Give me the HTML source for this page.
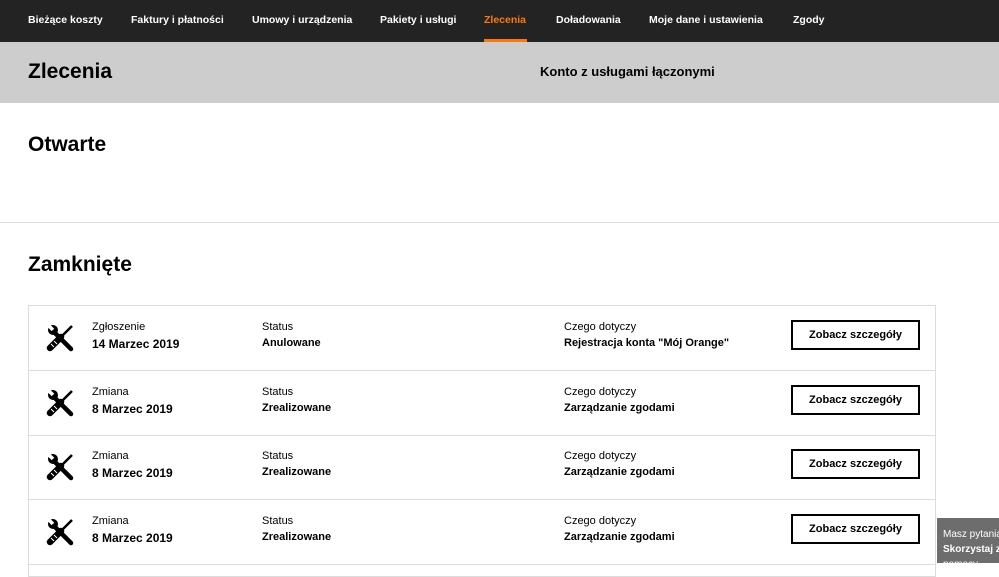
<!DOCTYPE html><html><head><meta charset="utf-8"><style>
body{margin:0;width:999px;height:563px;overflow:hidden;font-family:"Liberation Sans",Arial,sans-serif;background:#fff;position:relative}
.nav{height:42px;background:#232323;position:relative}
.nav span{position:absolute;top:14px;color:#fff;font-size:10.5px;font-weight:bold}
.nav .a{color:#ff7900}
.ul{position:absolute;left:484px;top:39px;width:43px;height:3px;background:#ff7900}
.hd{height:61px;background:#cdcdcd;position:relative}
.hd h1{position:absolute;left:28px;top:18px;margin:0;font-size:21px}
.hd .k{position:absolute;left:540px;top:22px;font-size:13px;font-weight:bold}
h2{position:absolute;margin:0;font-size:21px;left:28px}
.sep{position:absolute;left:0;right:0;top:222px;height:1px;background:#ddd}
.card{position:absolute;left:28px;width:906px;border:1px solid #dcdcdc;top:305px;height:270px}
.row{position:absolute;left:0;width:906px;height:64px;border-bottom:1px solid #dcdcdc}
.row .l{position:absolute;font-size:11px;top:15px}
.row .v{position:absolute;font-size:11px;font-weight:bold;top:31px}
.row .big{font-size:12px;top:31px}
.btn{position:absolute;left:762px;top:14px;width:129px;height:30px;border:2px solid #000;box-sizing:border-box;font-size:11px;font-weight:bold;text-align:center;line-height:26px}
.ic{position:absolute;left:16px;top:17px}
.w{position:absolute;left:937px;top:518px;width:62px;height:45px;background:#6d6d6d;color:#fff;font-size:10px;padding:9px 0 0 6px;box-sizing:border-box;line-height:15px;white-space:nowrap;overflow:hidden}
</style></head><body>
<svg width="0" height="0" style="position:absolute"><defs><g id="t">
<path d="M5 9 L3 6 L7 2 L10 4 L9 7 L11 8 Z" fill="#000"/>
<circle cx="8" cy="7" r="5" fill="#000"/><path d="M3 2 L8 7" stroke="#fff" stroke-width="3.5"/>
<line x1="9" y1="9" x2="26" y2="26" stroke="#000" stroke-width="4.5" stroke-linecap="round"/>
<line x1="27" y1="3" x2="14" y2="16" stroke="#000" stroke-width="2.5"/>
<line x1="16" y1="14" x2="5" y2="25" stroke="#000" stroke-width="6.5" stroke-linecap="round"/>
<line x1="9" y1="18" x2="12" y2="21" stroke="#fff" stroke-width="1"/><line x1="6" y1="21" x2="9" y2="24" stroke="#fff" stroke-width="1"/>
</g></defs></svg>
<div class="nav">
<span style="left:28px">Bieżące koszty</span><span style="left:131px">Faktury i płatności</span><span style="left:252px">Umowy i urządzenia</span><span style="left:380px">Pakiety i usługi</span><span class="a" style="left:484px">Zlecenia</span><span style="left:556px">Doładowania</span><span style="left:649px">Moje dane i ustawienia</span><span style="left:793px">Zgody</span>
<div class="ul"></div></div>
<div class="hd"><h1>Zlecenia</h1><div class="k">Konto z usługami łączonymi</div></div>
<h2 style="top:133px">Otwarte</h2>
<div class="sep"></div>
<h2 style="top:253px">Zamknięte</h2>
<div class="card">
<div class="row" style="top:0"><svg class="ic" width="30" height="30" viewBox="0 0 30 30"><use href="#t"/></svg>
<div class="l" style="left:63px">Zgłoszenie</div><div class="v big" style="left:63px">14 Marzec 2019</div>
<div class="l" style="left:233px">Status</div><div class="v" style="left:233px">Anulowane</div>
<div class="l" style="left:535px">Czego dotyczy</div><div class="v" style="left:535px">Rejestracja konta "Mój Orange"</div>
<div class="btn">Zobacz szczegóły</div></div>
<div class="row" style="top:65px"><svg class="ic" width="30" height="30" viewBox="0 0 30 30"><use href="#t"/></svg>
<div class="l" style="left:63px">Zmiana</div><div class="v big" style="left:63px">8 Marzec 2019</div>
<div class="l" style="left:233px">Status</div><div class="v" style="left:233px">Zrealizowane</div>
<div class="l" style="left:535px">Czego dotyczy</div><div class="v" style="left:535px">Zarządzanie zgodami</div>
<div class="btn">Zobacz szczegóły</div></div>
<div class="row" style="top:129px"><svg class="ic" width="30" height="30" viewBox="0 0 30 30"><use href="#t"/></svg>
<div class="l" style="left:63px">Zmiana</div><div class="v big" style="left:63px">8 Marzec 2019</div>
<div class="l" style="left:233px">Status</div><div class="v" style="left:233px">Zrealizowane</div>
<div class="l" style="left:535px">Czego dotyczy</div><div class="v" style="left:535px">Zarządzanie zgodami</div>
<div class="btn">Zobacz szczegóły</div></div>
<div class="row" style="top:194px"><svg class="ic" width="30" height="30" viewBox="0 0 30 30"><use href="#t"/></svg>
<div class="l" style="left:63px">Zmiana</div><div class="v big" style="left:63px">8 Marzec 2019</div>
<div class="l" style="left:233px">Status</div><div class="v" style="left:233px">Zrealizowane</div>
<div class="l" style="left:535px">Czego dotyczy</div><div class="v" style="left:535px">Zarządzanie zgodami</div>
<div class="btn">Zobacz szczegóły</div></div>
</div>
<div class="w">Masz pytania?<br><b>Skorzystaj z</b><br>pomocy</div>
</body></html>
